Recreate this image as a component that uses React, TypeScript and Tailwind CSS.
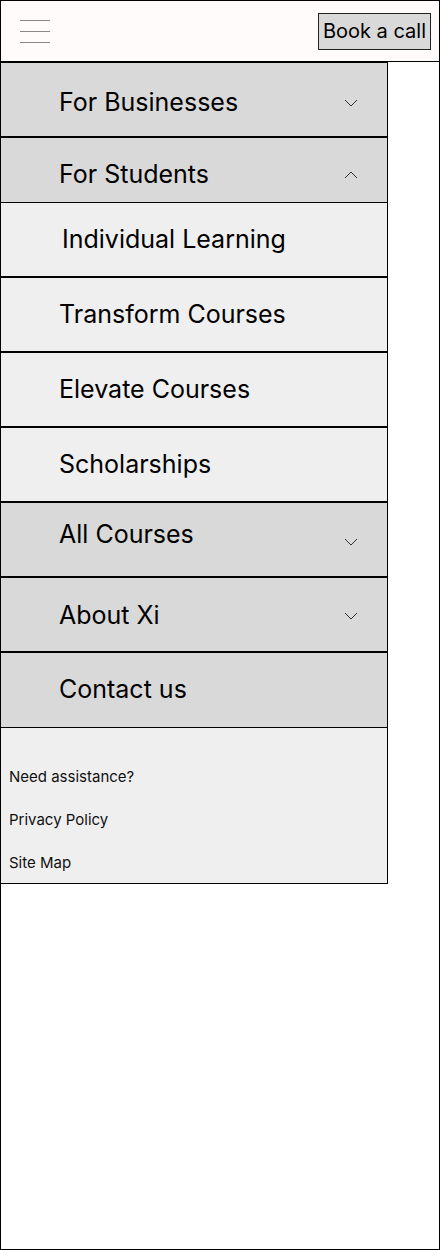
const font = { fontFamily: 'Inter, "Noto Sans", sans-serif' }

function Chevron({ up = false }: { up?: boolean }) {
  return (
    <svg width="14" height="8" viewBox="0 0 14 8" fill="none" className="text-[#333]">
      {up ? (
        <path d="M1 7L7 1L13 7" stroke="currentColor" strokeWidth="1" />
      ) : (
        <path d="M1 1L7 7L13 1" stroke="currentColor" strokeWidth="1" />
      )}
    </svg>
  )
}

function Row({
  label,
  chevron,
  light = false,
  className = '',
}: {
  label: string
  chevron?: 'up' | 'down'
  light?: boolean
  className?: string
}) {
  return (
    <div
      className={`flex items-center justify-between pl-[58px] pr-[29px] text-[25px] text-black ${
        light ? 'bg-[#efefef]' : 'bg-[#d9d9d9]'
      } ${className}`}
    >
      <span>{label}</span>
      {chevron && <Chevron up={chevron === 'up'} />}
    </div>
  )
}

export default function App() {
  return (
    <div className="w-[440px] h-[1250px] border border-black bg-white overflow-hidden" style={font}>
      <header className="h-[61px] flex items-center justify-between pl-[19px] pr-[8px] bg-[#fffbfa] border-b border-black">
        <button aria-label="menu" className="flex flex-col gap-[10px] w-[30px]">
          <span className="block h-px bg-[#888]" />
          <span className="block h-px bg-[#888]" />
          <span className="block h-px bg-[#888]" />
        </button>
        <button className="h-[37px] px-[4px] bg-[#d9d9d9] border border-[#222] text-[20px] text-black leading-none">
          Book a call
        </button>
      </header>

      <nav className="w-[387px] border-r border-black border-t border-t-black">
        <Row label="For Businesses" chevron="down" className="h-[75px] pt-[6px] border-b-2 border-black" />
        <Row label="For Students" chevron="up" className="h-[65px] pt-[10px] border-b border-black" />
        <Row label="Individual Learning" light className="h-[75px] pl-[61px] border-b-2 border-black" />
        <Row label="Transform Courses" light className="h-[75px] border-b-2 border-black" />
        <Row label="Elevate Courses" light className="h-[75px] border-b-2 border-black" />
        <Row label="Scholarships" light className="h-[75px] border-b-2 border-black" />
        <div className="h-[75px] flex justify-between pl-[58px] pr-[29px] bg-[#d9d9d9] border-b-2 border-black text-[25px]">
          <span className="pt-[13px]">All Courses</span>
          <span className="pt-[35px]">
            <Chevron />
          </span>
        </div>
        <Row label="About Xi" chevron="down" className="h-[75px] pt-[2px] border-b-2 border-black" />
        <Row label="Contact us" className="h-[75px] border-b border-black" />
        <div className="h-[156px] bg-[#efefef] border-b border-black pl-[8px] pt-[38px] flex flex-col gap-[20.5px] text-[15px] text-[#111]">
          <a>Need assistance?</a>
          <a>Privacy Policy</a>
          <a>Site Map</a>
        </div>
      </nav>
    </div>
  )
}
